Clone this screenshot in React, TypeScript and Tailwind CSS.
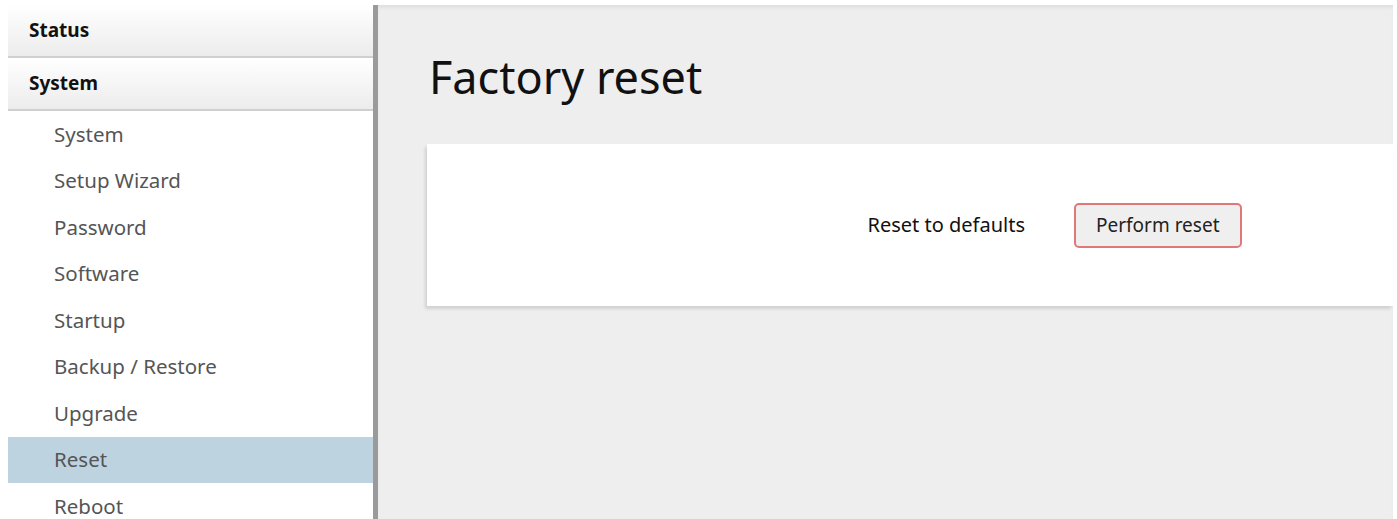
import React from 'react';

const menu = ['System', 'Setup Wizard', 'Password', 'Software', 'Startup', 'Backup / Restore', 'Upgrade', 'Reset', 'Reboot'];
const active = 'Reset';

const font = { fontFamily: '"Noto Sans", "Open Sans", sans-serif' };

function GroupHeader({ title }: { title: string }) {
  return (
    <div className="h-[53px] flex items-center pl-[21px] bg-gradient-to-b from-white to-[#ececec] border-b-2 border-[#cfcfcf] text-[19px] font-bold text-[#111]">
      {title}
    </div>
  );
}

export default function App() {
  return (
    <div className="w-[1397px] h-[519px] overflow-hidden bg-white pt-[5px] pl-[8px] pr-[4px] flex" style={font}>
      {/* Sidebar */}
      <aside className="w-[370px] shrink-0 bg-white border-r-[5px] border-[#9a9a9a]">
        <GroupHeader title="Status" />
        <GroupHeader title="System" />
        <ul>
          {menu.map((item) => (
            <li
              key={item}
              className={`h-[46.5px] flex items-center pl-[46px] text-[20.5px] text-[#555] ${item === active ? 'bg-[#bdd3e0]' : ''}`}
            >
              {item}
            </li>
          ))}
        </ul>
      </aside>

      {/* Main content */}
      <main className="flex-1 bg-[#eeeeee] shadow-[inset_0_4px_4px_-2px_rgba(0,0,0,0.08)] pl-[49px] pt-[42px]">
        <h1 className="text-[45px] leading-[60px] text-[#111] ml-[2px]">Factory reset</h1>
        <section className="mt-[37px] h-[162px] bg-white shadow-[-2px_3px_3px_rgba(0,0,0,0.12)] flex items-center">
          <label className="w-[598px] text-right text-[20px] text-[#111]">Reset to defaults</label>
          <button className="ml-[49px] h-[45px] px-[20px] rounded-[5px] border-2 border-[#e07878] bg-[#efefef] text-[19px] text-[#222]">
            Perform reset
          </button>
        </section>
      </main>
    </div>
  );
}
